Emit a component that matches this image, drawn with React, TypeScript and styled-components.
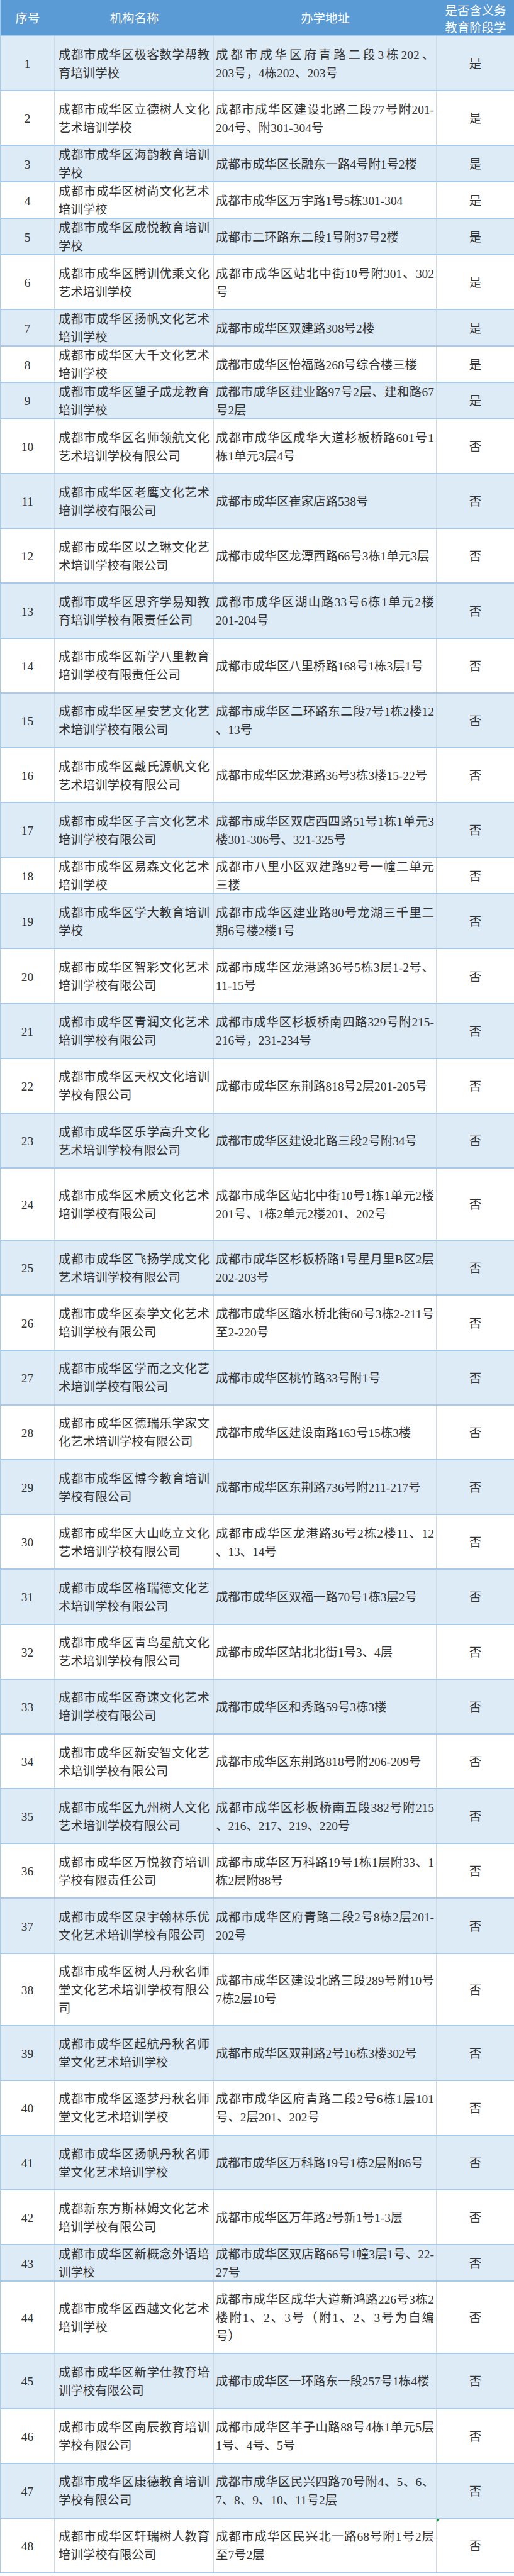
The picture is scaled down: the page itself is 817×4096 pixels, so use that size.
import React from "react";
import styled, { createGlobalStyle } from "styled-components";

type Size = "s" | "m" | "l";

interface School {
  name: string[];
  addr: string[];
  yes: boolean;
  size: Size;
}

const ROW_HEIGHT: Record<Size, number> = { s: 57.9, m: 87.2, l: 115 };

const COLUMNS = "86px 253px 354px 124px";

const schools: School[] = [
  { name: ["成都市成华区极客数学帮教", "育培训学校"], addr: ["成都市成华区府青路二段3栋202、", "203号，4栋202、203号"], yes: true, size: "m" },
  { name: ["成都市成华区立德树人文化", "艺术培训学校"], addr: ["成都市成华区建设北路二段77号附201-", "204号、附301-304号"], yes: true, size: "m" },
  { name: ["成都市成华区海韵教育培训", "学校"], addr: ["成都市成华区长融东一路4号附1号2楼"], yes: true, size: "s" },
  { name: ["成都市成华区树尚文化艺术", "培训学校"], addr: ["成都市成华区万宇路1号5栋301-304"], yes: true, size: "s" },
  { name: ["成都市成华区成悦教育培训", "学校"], addr: ["成都市二环路东二段1号附37号2楼"], yes: true, size: "s" },
  { name: ["成都市成华区腾训优乘文化", "艺术培训学校"], addr: ["成都市成华区站北中街10号附301、302", "号"], yes: true, size: "m" },
  { name: ["成都市成华区扬帆文化艺术", "培训学校"], addr: ["成都市成华区双建路308号2楼"], yes: true, size: "s" },
  { name: ["成都市成华区大千文化艺术", "培训学校"], addr: ["成都市成华区怡福路268号综合楼三楼"], yes: true, size: "s" },
  { name: ["成都市成华区望子成龙教育", "培训学校"], addr: ["成都市成华区建业路97号2层、建和路67", "号2层"], yes: true, size: "s" },
  { name: ["成都市成华区名师领航文化", "艺术培训学校有限公司"], addr: ["成都市成华区成华大道杉板桥路601号1", "栋1单元3层4号"], yes: false, size: "m" },
  { name: ["成都市成华区老鹰文化艺术", "培训学校有限公司"], addr: ["成都市成华区崔家店路538号"], yes: false, size: "m" },
  { name: ["成都市成华区以之琳文化艺", "术培训学校有限公司"], addr: ["成都市成华区龙潭西路66号3栋1单元3层"], yes: false, size: "m" },
  { name: ["成都市成华区思齐学易知教", "育培训学校有限责任公司"], addr: ["成都市成华区湖山路33号6栋1单元2楼", "201-204号"], yes: false, size: "m" },
  { name: ["成都市成华区新学八里教育", "培训学校有限责任公司"], addr: ["成都市成华区八里桥路168号1栋3层1号"], yes: false, size: "m" },
  { name: ["成都市成华区星安艺文化艺", "术培训学校有限公司"], addr: ["成都市成华区二环路东二段7号1栋2楼12", "、13号"], yes: false, size: "m" },
  { name: ["成都市成华区戴氏源帆文化", "艺术培训学校有限公司"], addr: ["成都市成华区龙港路36号3栋3楼15-22号"], yes: false, size: "m" },
  { name: ["成都市成华区子言文化艺术", "培训学校有限公司"], addr: ["成都市成华区双店西四路51号1栋1单元3", "楼301-306号、321-325号"], yes: false, size: "m" },
  { name: ["成都市成华区易森文化艺术", "培训学校"], addr: ["成都市八里小区双建路92号一幢二单元", "三楼"], yes: false, size: "s" },
  { name: ["成都市成华区学大教育培训", "学校"], addr: ["成都市成华区建业路80号龙湖三千里二", "期6号楼2楼1号"], yes: false, size: "m" },
  { name: ["成都市成华区智彩文化艺术", "培训学校有限公司"], addr: ["成都市成华区龙港路36号5栋3层1-2号、", "11-15号"], yes: false, size: "m" },
  { name: ["成都市成华区青润文化艺术", "培训学校有限公司"], addr: ["成都市成华区杉板桥南四路329号附215-", "216号，231-234号"], yes: false, size: "m" },
  { name: ["成都市成华区天权文化培训", "学校有限公司"], addr: ["成都市成华区东荆路818号2层201-205号"], yes: false, size: "m" },
  { name: ["成都市成华区乐学高升文化", "艺术培训学校有限公司"], addr: ["成都市成华区建设北路三段2号附34号"], yes: false, size: "m" },
  { name: ["成都市成华区术质文化艺术", "培训学校有限公司"], addr: ["成都市成华区站北中街10号1栋1单元2楼", "201号、1栋2单元2楼201、202号"], yes: false, size: "l" },
  { name: ["成都市成华区飞扬学成文化", "艺术培训学校有限公司"], addr: ["成都市成华区杉板桥路1号星月里B区2层", "202-203号"], yes: false, size: "m" },
  { name: ["成都市成华区秦学文化艺术", "培训学校有限公司"], addr: ["成都市成华区踏水桥北街60号3栋2-211号", "至2-220号"], yes: false, size: "m" },
  { name: ["成都市成华区学而之文化艺", "术培训学校有限公司"], addr: ["成都市成华区桃竹路33号附1号"], yes: false, size: "m" },
  { name: ["成都市成华区德瑞乐学家文", "化艺术培训学校有限公司"], addr: ["成都市成华区建设南路163号15栋3楼"], yes: false, size: "m" },
  { name: ["成都市成华区博今教育培训", "学校有限公司"], addr: ["成都市成华区东荆路736号附211-217号"], yes: false, size: "m" },
  { name: ["成都市成华区大山屹立文化", "艺术培训学校有限公司"], addr: ["成都市成华区龙港路36号2栋2楼11、12", "、13、14号"], yes: false, size: "m" },
  { name: ["成都市成华区格瑞德文化艺", "术培训学校有限公司"], addr: ["成都市成华区双福一路70号1栋3层2号"], yes: false, size: "m" },
  { name: ["成都市成华区青鸟星航文化", "艺术培训学校有限公司"], addr: ["成都市成华区站北北街1号3、4层"], yes: false, size: "m" },
  { name: ["成都市成华区奇速文化艺术", "培训学校有限公司"], addr: ["成都市成华区和秀路59号3栋3楼"], yes: false, size: "m" },
  { name: ["成都市成华区新安智文化艺", "术培训学校有限公司"], addr: ["成都市成华区东荆路818号附206-209号"], yes: false, size: "m" },
  { name: ["成都市成华区九州树人文化", "艺术培训学校有限公司"], addr: ["成都市成华区杉板桥南五段382号附215", "、216、217、219、220号"], yes: false, size: "m" },
  { name: ["成都市成华区万悦教育培训", "学校有限责任公司"], addr: ["成都市成华区万科路19号1栋1层附33、1", "栋2层附88号"], yes: false, size: "m" },
  { name: ["成都市成华区泉宇翰林乐优", "文化艺术培训学校有限公司"], addr: ["成都市成华区府青路二段2号8栋2层201-", "202号"], yes: false, size: "m" },
  { name: ["成都市成华区树人丹秋名师", "堂文化艺术培训学校有限公", "司"], addr: ["成都市成华区建设北路三段289号附10号", "7栋2层10号"], yes: false, size: "l" },
  { name: ["成都市成华区起航丹秋名师", "堂文化艺术培训学校"], addr: ["成都市成华区双荆路2号16栋3楼302号"], yes: false, size: "m" },
  { name: ["成都市成华区逐梦丹秋名师", "堂文化艺术培训学校"], addr: ["成都市成华区府青路二段2号6栋1层101", "号、2层201、202号"], yes: false, size: "m" },
  { name: ["成都市成华区扬帆丹秋名师", "堂文化艺术培训学校"], addr: ["成都市成华区万科路19号1栋2层附86号"], yes: false, size: "m" },
  { name: ["成都新东方斯林姆文化艺术", "培训学校有限公司"], addr: ["成都市成华区万年路2号新1号1-3层"], yes: false, size: "m" },
  { name: ["成都市成华区新概念外语培", "训学校"], addr: ["成都市成华区双店路66号1幢3层1号、22-", "27号"], yes: false, size: "s" },
  { name: ["成都市成华区西越文化艺术", "培训学校"], addr: ["成都市成华区成华大道新鸿路226号3栋2", "楼附1、2、3号（附1、2、3号为自编", "号）"], yes: false, size: "l" },
  { name: ["成都市成华区新学仕教育培", "训学校有限公司"], addr: ["成都市成华区一环路东一段257号1栋4楼"], yes: false, size: "m" },
  { name: ["成都市成华区南辰教育培训", "学校有限公司"], addr: ["成都市成华区羊子山路88号4栋1单元5层", "1号、4号、5号"], yes: false, size: "m" },
  { name: ["成都市成华区康德教育培训", "学校有限公司"], addr: ["成都市成华区民兴四路70号附4、5、6、", "7、8、9、10、11号2层"], yes: false, size: "m" },
  { name: ["成都市成华区轩瑞树人教育", "培训学校有限公司"], addr: ["成都市成华区民兴北一路68号附1号2层", "至7号2层"], yes: false, size: "m" },
];

const GlobalStyle = createGlobalStyle`
  html, body {
    margin: 0;
    padding: 0;
    background: #ffffff;
  }
  body {
    font-family: "Liberation Serif", "Noto Sans CJK SC", serif;
  }
  * {
    box-sizing: border-box;
  }
`;

const Table = styled.div`
  width: 817px;
  color: #333333;
  font-size: 19.4px;
`;

const HeadRow = styled.div`
  display: grid;
  grid-template-columns: ${COLUMNS};
  height: 58px;
  background: #5b9bd5;
  color: #ffffff;
  border-bottom: 2px solid #a9c9e9;
  border-left: 1px solid #a9c9e9;
`;

// the last header cell is cut after two lines, as in the source sheet
const HeadCell = styled.div<{ $top?: boolean }>`
  display: flex;
  flex-direction: column;
  align-items: center;
  justify-content: ${(p) => (p.$top ? "flex-start" : "center")};
  padding-top: ${(p) => (p.$top ? "4px" : "3px")};
  line-height: 27px;
  overflow: hidden;
  white-space: nowrap;
`;

const Row = styled.div<{ $h: number; $shade: boolean }>`
  display: grid;
  grid-template-columns: ${COLUMNS};
  height: ${(p) => p.$h}px;
  background: ${(p) => (p.$shade ? "#ddebf7" : "#ffffff")};
  border-bottom: 2px solid #a9c9e9;
  border-left: 1px solid #a9c9e9;
`;

const Cell = styled.div<{ $pad: number; $center?: boolean; $last?: boolean; $flag?: boolean }>`
  position: relative;
  display: flex;
  flex-direction: column;
  justify-content: center;
  align-items: ${(p) => (p.$center ? "center" : "stretch")};
  padding: 2px ${(p) => p.$pad}px 0;
  line-height: 29px;
  border-right: 1px solid ${(p) => (p.$last ? "#a9c9e9" : "#cbd9e8")};
  overflow: hidden;

  &::before {
    content: "";
    display: ${(p) => (p.$flag ? "block" : "none")};
    position: absolute;
    left: 0;
    top: 0;
    width: 0;
    height: 0;
    border-style: solid;
    border-width: 6px 5px 0 0;
    border-color: #1f8a3c transparent transparent transparent;
  }
`;

const Line = styled.div<{ $fill: boolean }>`
  white-space: nowrap;
  text-align: ${(p) => (p.$fill ? "justify" : "left")};
  text-align-last: ${(p) => (p.$fill ? "justify" : "auto")};
`;

const Lines: React.FC<{ lines: string[] }> = ({ lines }) => (
  <>
    {lines.map((l, i) => (
      <Line key={i} $fill={i < lines.length - 1}>
        {l}
      </Line>
    ))}
  </>
);

export default function App() {
  return (
    <>
      <GlobalStyle />
      <Table>
        <HeadRow>
          <HeadCell>序号</HeadCell>
          <HeadCell>机构名称</HeadCell>
          <HeadCell>办学地址</HeadCell>
          <HeadCell $top>
            <div>是否含义务</div>
            <div>教育阶段学</div>
          </HeadCell>
        </HeadRow>
        {schools.map((s, i) => (
          <Row key={i} $h={ROW_HEIGHT[s.size]} $shade={i % 2 === 0}>
            <Cell $pad={0} $center>
              {i + 1}
            </Cell>
            <Cell $pad={6}>
              <Lines lines={s.name} />
            </Cell>
            <Cell $pad={3}>
              <Lines lines={s.addr} />
            </Cell>
            <Cell $pad={0} $center $last $flag={i === schools.length - 1}>
              {s.yes ? "是" : "否"}
            </Cell>
          </Row>
        ))}
      </Table>
    </>
  );
}
